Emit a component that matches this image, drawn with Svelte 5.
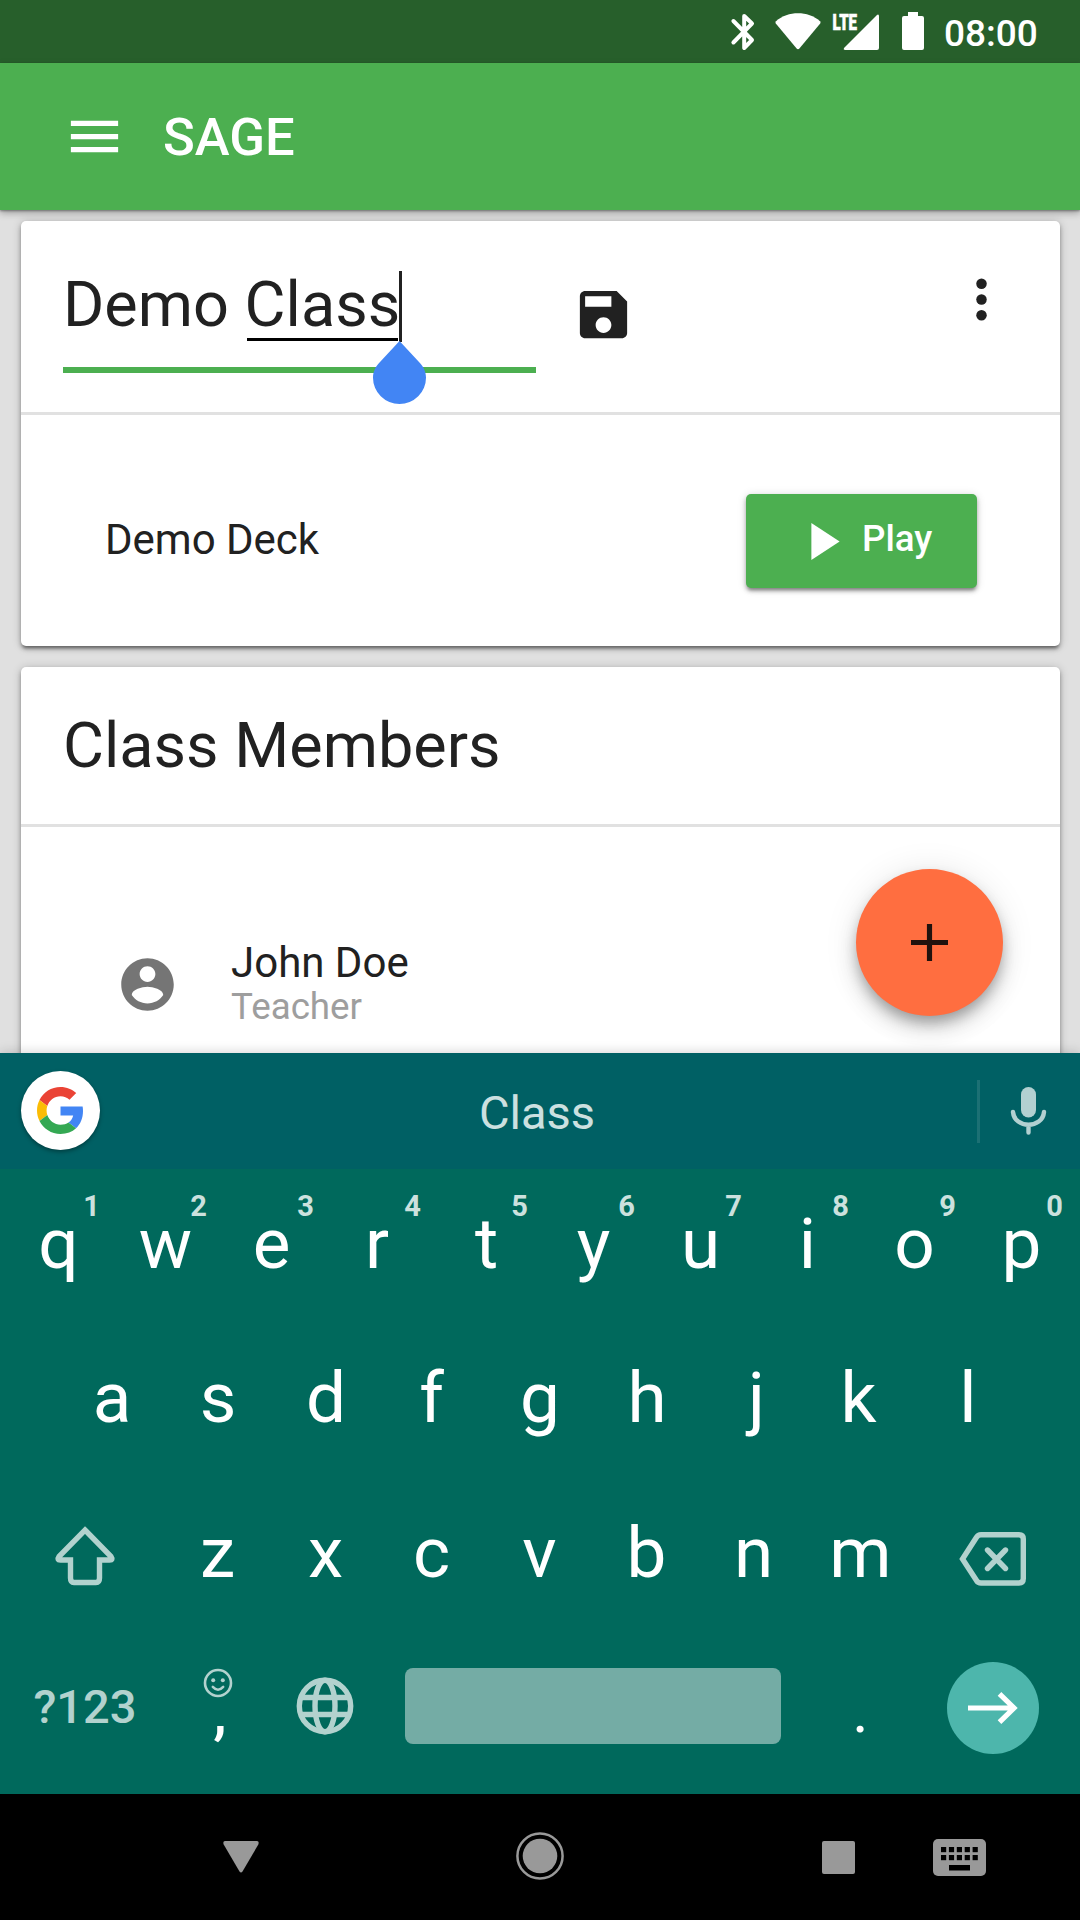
<script>
  const nudge = { e: -1, r: -2.5, f: -1.5, j: 2.5, k: -2.5, z: -1, s: -1, c: -1 };
  const toKey = (letter) => ({ letter, shift: nudge[letter] ?? 0 });
  const topRow = [...'qwertyuiop'].map((letter, i) => ({ ...toKey(letter), digit: (i + 1) % 10 }));
  const homeRow = [...'asdfghjkl'].map(toKey);
  const bottomRow = [...'zxcvbnm'].map(toKey);
  const keyCols = [0, 1, 2, 3, 4];
</script>

<div class="screen">
  <div class="status">
    <svg class="bt" viewBox="0 0 24 38" fill="none" stroke="#fff" stroke-width="4" stroke-linecap="round" stroke-linejoin="round">
      <path d="M2.4 8 L21 27 L13.2 35 V3 L21 10.5 L2.4 29.5" />
    </svg>
    <svg class="wifi" viewBox="0 0 46 37" fill="#fff">
      <path d="M1 8.2 C13 -2.4 33 -2.4 45 8.2 Q46 9.2 45.2 10.4 L24.4 35.6 Q23 37 21.600 35.600 L.8 10.400 Q0 9.200 1 8.200Z" />
    </svg>
    <svg class="signal" viewBox="0 0 47 38" fill="#fff">
      <path d="M43.500 3.400 Q46 1.400 46 4.500 V36 Q46 38 44 38 H12.500 Q9.500 38 11.500 35.500Z" />
      <text x="-0.500" y="18" font-size="22.500" font-weight="900" stroke="#fff" stroke-width=".7" textLength="24.500" lengthAdjust="spacingAndGlyphs">LTE</text>
    </svg>
    <svg class="battery" viewBox="0 0 22 38" fill="#fff">
      <path d="M6 0 H16 V4 H20 Q22 4 22 6 V36 Q22 38 20 38 H2 Q0 38 0 36 V6 Q0 4 2 4 H6Z" />
    </svg>
    <span class="time">08:00</span>
  </div>

  <header class="appbar">
    <svg class="menu" viewBox="0 0 24 24" fill="#fff"><path d="M3 18h18v-2H3v2zm0-5h18v-2H3v2zm0-7v2h18V6H3z" /></svg>
    <h1>SAGE</h1>
  </header>

  <main>
    <section class="card class-card">
      <div class="card-head edit-head">
        <div class="field">
          <span>Demo <span class="composing">Class</span></span>
          <i class="caret"></i>
          <svg class="handle" viewBox="0 0 53 63"><path fill="#4285f4" d="M26.500 0 L46 21 C50.500 25.500 53 30.500 53 36.700 A26.500 26.300 0 0 1 0 36.700 C0 30.500 2.500 25.500 7 21Z" /></svg>
        </div>
        <svg class="save" viewBox="0 0 24 24" fill="#212121"><path d="M17 3H5c-1.110 0-2 .9-2 2v14c0 1.100.890 2 2 2h14c1.100 0 2-.9 2-2V7l-4-4zm-5 16c-1.660 0-3-1.340-3-3s1.340-3 3-3 3 1.340 3 3-1.340 3-3 3zm3-10H5V5h10v4z" /></svg>
        <svg class="more" viewBox="0 0 24 24" fill="#212121"><circle cx="12" cy="6" r="2" /><circle cx="12" cy="12" r="2" /><circle cx="12" cy="18" r="2" /></svg>
      </div>
      <div class="deck">
        <span>Demo Deck</span>
        <button>
          <svg viewBox="0 0 29 38" fill="#fff"><path d="M0 0 V38 L29 19Z" /></svg>
          Play
        </button>
      </div>
    </section>

    <section class="card">
      <div class="card-head title-head">Class Members</div>
      <div class="member">
        <svg viewBox="0 0 24 24" fill="#757575"><path d="M12 2C6.480 2 2 6.480 2 12s4.480 10 10 10 10-4.480 10-10S17.520 2 12 2zm0 3c1.660 0 3 1.340 3 3s-1.340 3-3 3-3-1.340-3-3 1.340-3 3-3zm0 14.200c-2.500 0-4.710-1.280-6-3.220.030-1.990 4-3.080 6-3.080 1.990 0 5.970 1.090 6 3.080-1.290 1.940-3.500 3.220-6 3.220z" /></svg>
        <div class="who">
          <span class="name">John Doe</span>
          <span class="role">Teacher</span>
        </div>
      </div>
    </section>

    <div class="fab"><svg viewBox="0 0 38 38"><path d="M19 0V38M0 19H38" stroke="#20120e" stroke-width="5.300" /></svg></div>
  </main>

  <div class="keyboard">
    <div class="suggest">
      <div class="google">
        <svg viewBox="0 0 48 48">
          <path fill="#EA4335" d="M24 9.500c3.540 0 6.710 1.220 9.210 3.600l6.850-6.850C35.900 2.380 30.470 0 24 0 14.620 0 6.510 5.380 2.560 13.220l7.980 6.190C12.430 13.720 17.740 9.500 24 9.500z" />
          <path fill="#4285F4" d="M46.980 24.550c0-1.570-.150-3.090-.380-4.550H24v9.020h12.940c-.580 2.960-2.260 5.480-4.780 7.180l7.730 6c4.510-4.180 7.090-10.360 7.090-17.650z" />
          <path fill="#FBBC05" d="M10.530 28.590c-.480-1.450-.760-2.990-.760-4.590s.270-3.140.760-4.590l-7.980-6.190C.920 16.460 0 20.120 0 24c0 3.880.920 7.540 2.560 10.780l7.970-6.190z" />
          <path fill="#34A853" d="M24 48c6.480 0 11.930-2.130 15.890-5.810l-7.730-6c-2.150 1.450-4.920 2.300-8.160 2.300-6.260 0-11.570-4.220-13.470-9.910l-7.980 6.190C6.510 42.620 14.620 48 24 48z" />
        </svg>
      </div>
      <span class="word">Class</span>
      <i class="sep"></i>
      <svg class="mic" viewBox="0 0 35 48">
        <rect x="10" y="0" width="15" height="30.500" rx="7.500" fill="#b2d0d1" />
        <path d="M2 25 C3.500 42 31.500 42 33 25 M17.500 38 V45.500" fill="none" stroke="#b2d0d1" stroke-width="4.400" stroke-linecap="round" />
      </svg>
    </div>

    <div class="row row1">
      {#each topRow as key}
        <div class="key"><sup>{key.digit}</sup><span style:margin-left="{key.shift * 2}px">{key.letter}</span></div>
      {/each}
    </div>
    <div class="row row2">
      {#each homeRow as key}
        <div class="key"><span style:margin-left="{key.shift * 2}px">{key.letter}</span></div>
      {/each}
    </div>
    <div class="row row3">
      <div class="key wide">
        <svg class="shift" viewBox="0 0 60 60"><path d="M30 4 L56 30.500 Q58.500 34 54.500 34 H44.500 V52 Q44.500 56.500 41 56.500 H19 Q15.500 56.500 15.500 52 V34 H5.500 Q1.500 34 4 30.500Z" fill="none" stroke="#b2d2ce" stroke-width="5.400" /></svg>
      </div>
      {#each bottomRow as key}
        <div class="key"><span style:margin-left="{key.shift * 2}px">{key.letter}</span></div>
      {/each}
      <div class="key wide">
        <svg class="del" viewBox="0 0 67 54" fill="none" stroke="#b2d2ce" stroke-width="5.400">
          <path d="M22 2.800 H60 Q64.300 2.800 64.300 7 V46.500 Q64.300 51 60 51 H22 Q19 51 17.500 48.500 L3.500 27 L17.500 5.300 Q19 2.800 22 2.800Z" />
          <path d="M28.500 18 L46.500 36.500 M46.500 18 L28.500 36.500" stroke-linecap="round" />
        </svg>
      </div>
    </div>
    <div class="row row4">
      <div class="key wide sym">?123</div>
      <div class="key comma">
        <svg viewBox="0 0 30 30"><circle cx="15" cy="15" r="13" fill="none" stroke="#b2d2ce" stroke-width="2.600" /><circle cx="10.200" cy="12.200" r="2" fill="#b2d2ce" /><circle cx="19.800" cy="12.200" r="2" fill="#b2d2ce" /><path d="M9.800 18.800 Q15 24.500 20.200 18.800" fill="none" stroke="#b2d2ce" stroke-width="2.500" stroke-linecap="round" /></svg>
        <span>,</span>
      </div>
      <div class="key">
        <svg class="globe" viewBox="0 0 58 58" fill="none" stroke="#b2d2ce" stroke-width="5.400"><circle cx="29" cy="29" r="25.700" /><ellipse cx="29" cy="29" rx="10" ry="25.700" /><path d="M5 20.500H53M5 37.500H53" /></svg>
      </div>
      <div class="space"></div>
      <div class="key dot">.</div>
      <div class="key wide">
        <div class="enter"><svg viewBox="0 0 50 32" fill="none" stroke="#fff" stroke-width="5.200"><path d="M0 16H46M31.500 1.800L46 16L31.500 30.200" /></svg></div>
      </div>
    </div>
  </div>

  <nav>
    <svg class="n-back" viewBox="0 0 36 32"><path fill="#999" d="M2 0H34Q36.500 .5 35.300 3.500L19.500 30.500Q18 32.500 16.500 30.500L.7 3.500Q-.5 .5 2 0Z" /></svg>
    <svg class="n-home" viewBox="0 0 48 48"><circle cx="24" cy="24" r="22.600" fill="none" stroke="#999" stroke-width="2.500" /><circle cx="24" cy="24" r="17.300" fill="#999" /></svg>
    <div class="n-recent"></div>
    <svg class="n-kbd" viewBox="0 0 53 37">
      <rect width="53" height="37" rx="5" fill="#999" />
      {#each keyCols as c}
        <rect x={8 + c * 7.900} y="8" width="5.200" height="5.200" />
        <rect x={8 + c * 7.900} y="16" width="5.200" height="5.200" />
      {/each}
      <rect x="16" y="26" width="21" height="5.500" />
    </svg>
  </nav>
</div>

<style>
  :global(body) { margin: 0; background: #000; }
  * { box-sizing: border-box; }
  svg { display: block; flex: none; overflow: visible; }
  .screen { width: 1080px; height: 1920px; display: flex; flex-direction: column; overflow: hidden; font-family: Roboto, "Noto Sans", sans-serif; color: #212121; }

  .status { height: 63px; flex: none; display: flex; align-items: flex-start; padding: 12px 43px 0 731px; background: #275f2b; color: #fff; }
  .bt { width: 24px; height: 38px; margin-top: 1px; }
  .wifi { width: 46px; height: 37px; margin: 1px 0 0 20px; }
  .signal { width: 47px; height: 38px; margin-left: 12px; }
  .battery { width: 22px; height: 38px; margin-left: 22px; }
  .time { margin-left: 20px; font-size: 37px; font-weight: 500; line-height: 43px; white-space: nowrap; }

  .appbar { position: relative; z-index: 2; height: 147px; flex: none; display: flex; align-items: center; padding-left: 63px; background: #4caf50; box-shadow: 0 1px 2px rgba(0,0,0,.35), 0 3px 7px rgba(0,0,0,.3); }
  .menu { width: 63px; height: 63px; }
  h1 { margin: 0 0 0 37px; color: #fff; font-size: 52.500px; font-weight: 500; line-height: 60px; }

  main { position: relative; height: 843px; flex: none; overflow: hidden; background: #e0e0e0; display: flex; flex-direction: column; gap: 21px; padding: 11px 20px 0 21px; }
  .card { flex: none; background: #fff; border-radius: 5px; box-shadow: 0 3px 4px rgba(0,0,0,.3), 0 1px 10px rgba(0,0,0,.2), 0 4px 3px -2px rgba(0,0,0,.28); }
  .class-card { height: 425px; }
  .card-head { display: flex; border-bottom: 3px solid #e1e1e1; font-size: 63px; line-height: 74px; }
  .edit-head { height: 194px; padding: 0 47px 0 42px; align-items: flex-start; }
  .title-head { height: 160px; padding: 0 42px; align-items: center; }
  .field { position: relative; width: 473px; margin-top: 46px; height: 106px; padding-top: 1px; border-bottom: 6px solid #4caf50; white-space: nowrap; }
  .composing { position: relative; }
  .composing::after { content: ''; position: absolute; left: 2px; right: 2px; bottom: 0; height: 3px; background: #000; }
  .caret { position: absolute; left: 336px; top: 4px; width: 3px; height: 71px; background: #212121; }
  .handle { position: absolute; left: 310px; top: 74px; width: 53px; height: 63px; }
  .save { width: 63px; height: 63px; margin: 62px 0 0 36px; }
  .more { width: 63px; height: 63px; margin: 47px 0 0 auto; }
  .deck { height: 231px; display: flex; align-items: center; justify-content: space-between; padding: 20px 83px 0 84px; font-size: 42px; line-height: 49px; }
  .deck > span { margin-top: -3px; }
  button { width: 231px; height: 94px; border: 0; border-radius: 5px; display: flex; align-items: center; gap: 22px; padding: 0 0 4px 65px; background: #4caf50; color: #fff; font: 500 36.750px/43px Roboto, sans-serif; box-shadow: 0 3px 4px rgba(0,0,0,.3), 0 1px 10px rgba(0,0,0,.14), 0 4px 3px -2px rgba(0,0,0,.2); }
  button svg { width: 29px; height: 37px; margin-top: 5px; }

  .member { height: 260px; display: flex; padding: 111px 0 0 95px; }
  .member svg { width: 63px; height: 63px; margin-top: 15px; }
  .who { margin-left: 52px; display: flex; flex-direction: column; }
  .name { font-size: 42px; line-height: 50px; }
  .role { font-size: 36.750px; line-height: 38px; color: #9e9e9e; }
  .fab { position: absolute; left: 856px; top: 659px; width: 147px; height: 147px; border-radius: 50%; background: #ff6e40; display: grid; place-items: center; box-shadow: 0 8px 13px -2px rgba(0,0,0,.28), 0 14px 22px rgba(0,0,0,.12), 0 2px 34px rgba(0,0,0,.1); }
  .fab svg { width: 37px; height: 37px; }

  .keyboard { position: relative; height: 741px; flex: none; background: #00695c; box-shadow: 0 -2px 10px rgba(0,0,0,.14); }
  .suggest { height: 116px; display: flex; align-items: center; padding: 0 34px 0 21px; background: #006064; }
  .google { width: 79px; height: 79px; margin-bottom: 1px; border-radius: 50%; background: #fff; display: grid; place-items: center; box-shadow: 0 2px 4px rgba(0,0,0,.35); }
  .google svg { width: 47px; height: 47px; }
  .word { flex: 1; padding: 3px 6px 0 0; margin-left: -19px; margin-right: -22px; text-align: center; font-size: 47px; line-height: 55px; color: #cce0e0; }
  .sep { width: 3px; height: 63px; background: #1c7074; }
  .mic { width: 35px; height: 48px; margin-left: 31px; }

  .row { display: flex; color: #fff; font-size: 71px; line-height: 80px; }
  .key { position: relative; width: 107px; display: flex; align-items: center; justify-content: center; }
  .wide { width: 160px; }
  .row1 { height: 148px; padding: 2px 5px 0; }
  .row2 { height: 160px; padding: 2px 58.500px 0; }
  .row3 { height: 151px; padding: 0 5px; }
  .row4 { height: 158px; padding: 0 5px; align-items: stretch; }
  sup { position: absolute; right: 12px; top: 18px; font-size: 29px; line-height: 34px; font-weight: 700; color: #cce1de; }
  .shift { width: 60px; height: 60px; margin-top: 6px; }
  .del { width: 67px; height: 54px; margin: 13px 3px 0 0; }
  .sym { font-size: 47px; font-weight: 500; color: #b2d2ce; }
  .comma { flex-direction: column; justify-content: flex-start; padding: 40px 1px 0 0; font-size: 60px; font-weight: 500; line-height: 60px; }
  .comma svg { width: 30px; height: 30px; }
  .comma span { margin: -15px 0 0 4px; }
  .globe { width: 58px; height: 58px; margin: -2px 2px 0 0; }
  .space { width: 376px; height: 76px; margin: 40px 26px 0 26px; border-radius: 8px; background: #74aca5; }
  .dot { font-size: 62px; padding-top: 8px; }
  .enter { width: 92px; height: 92px; margin: 2px 2px 0 0; border-radius: 50%; background: #4db6ac; display: grid; place-items: center; }
  .enter svg { width: 50px; height: 32px; }

  nav { height: 126px; flex: none; background: #000; display: flex; align-items: center; padding-left: 223px; }
  .n-back { width: 36px; height: 32px; }
  .n-home { width: 48px; height: 48px; margin: 0 0 2px 257px; }
  .n-recent { width: 33px; height: 33px; margin-left: 258px; border-radius: 2px; background: #999; }
  .n-kbd { width: 53px; height: 37px; margin-left: 78px; }
</style>
